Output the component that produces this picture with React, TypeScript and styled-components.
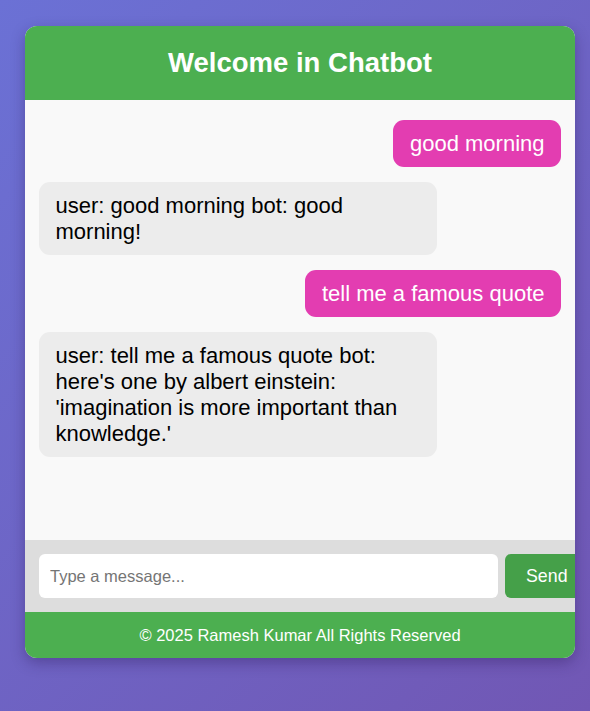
import React, { useState } from 'react';
import styled, { createGlobalStyle } from 'styled-components';

const GlobalStyle = createGlobalStyle`
  html, body {
    margin: 0;
    padding: 0;
  }
  body {
    min-height: 100vh;
    background: linear-gradient(135deg, #6b71d5 0%, #7157b4 100%);
    font-family: "Liberation Sans", Arial, sans-serif;
  }
`;

const Page = styled.div`
  padding: 26px 0 0 25px;
  min-height: 100vh;
  box-sizing: border-box;
`;

const ChatCard = styled.div`
  width: 550px;
  border-radius: 12px;
  overflow: hidden;
  background: #f9f9f9;
  box-shadow: 0 5px 14px rgba(40, 20, 80, 0.35);
`;

const Header = styled.header`
  background: #4caf50;
  color: #fff;
  text-align: center;
  padding: 21px 0;
`;

const Title = styled.h1`
  margin: 0;
  font-size: 27.5px;
  font-weight: bold;
  line-height: 32px;
`;

const Messages = styled.div`
  height: 440px;
  box-sizing: border-box;
  padding: 20px 14px;
  display: flex;
  flex-direction: column;
  gap: 15px;
  overflow-y: auto;
  background: #f9f9f9;
`;

const Bubble = styled.div<{ $fromUser?: boolean }>`
  align-self: ${(p) => (p.$fromUser ? 'flex-end' : 'flex-start')};
  max-width: 365px;
  padding: 10.5px 16.5px;
  border-radius: 11px;
  font-size: 22px;
  line-height: 26px;
  background: ${(p) => (p.$fromUser ? '#e33db1' : '#ececec')};
  color: ${(p) => (p.$fromUser ? '#fff' : '#000')};
`;

const InputBar = styled.div`
  display: flex;
  gap: 7px;
  padding: 14px;
  background: #dddddd;
`;

const MessageInput = styled.input`
  flex: 0 0 auto;
  width: 459px;
  height: 44px;
  box-sizing: border-box;
  padding: 0 11px;
  border: none;
  border-radius: 6px;
  background: #fff;
  font-family: "Liberation Sans", Arial, sans-serif;
  font-size: 16.5px;
  color: #222;
  outline: none;

  &::placeholder {
    color: #757575;
  }
`;

const SendButton = styled.button`
  flex: 0 0 auto;
  width: 84px;
  height: 44px;
  padding: 0 21px;
  border: none;
  border-radius: 6px;
  background: #45a049;
  color: #fff;
  font-family: "Liberation Sans", Arial, sans-serif;
  font-size: 17.8px;
  text-align: left;
  cursor: pointer;
`;

const Footer = styled.footer`
  background: #4caf50;
  color: #fff;
  text-align: center;
  font-size: 16.5px;
  line-height: 19px;
  padding: 13.5px 0;
`;

const initial = [
  { id: 1, user: true, text: 'good morning' },
  { id: 2, user: false, text: 'user: good morning bot: good morning!' },
  { id: 3, user: true, text: 'tell me a famous quote' },
  {
    id: 4,
    user: false,
    text: "user: tell me a famous quote bot: here's one by albert einstein: 'imagination is more important than knowledge.'",
  },
];

export default function App() {
  const [messages] = useState(initial);
  const [draft, setDraft] = useState('');

  return (
    <>
      <GlobalStyle />
      <Page>
        <ChatCard>
          <Header>
            <Title>Welcome in Chatbot</Title>
          </Header>
          <Messages>
            {messages.map((m) => (
              <Bubble key={m.id} $fromUser={m.user}>
                {m.text}
              </Bubble>
            ))}
          </Messages>
          <InputBar>
            <MessageInput
              type="text"
              placeholder="Type a message..."
              value={draft}
              onChange={(e) => setDraft(e.target.value)}
            />
            <SendButton>Send</SendButton>
          </InputBar>
          <Footer>© 2025 Ramesh Kumar All Rights Reserved</Footer>
        </ChatCard>
      </Page>
    </>
  );
}
